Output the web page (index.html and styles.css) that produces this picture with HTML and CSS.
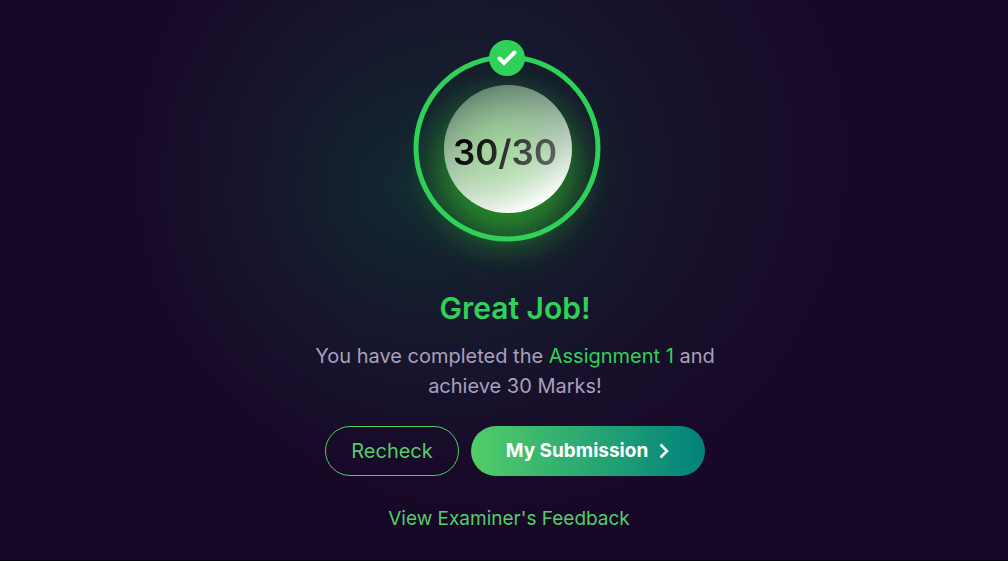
FILE: index.html
```html
<!DOCTYPE html>
<html lang="en">
<head>
<meta charset="utf-8">
<meta name="viewport" content="width=device-width, initial-scale=1">
<title>Great Job!</title>
<link rel="stylesheet" href="styles.css">
</head>
<body>
<main class="result">
  <div class="score">
    <svg class="score-art" viewBox="0 0 240 240" aria-hidden="true">
      <defs>
        <linearGradient id="ball" x1="0.3" y1="0" x2="0.7" y2="1">
          <stop offset="0" stop-color="#587568"/>
          <stop offset="0.35" stop-color="#90ac96"/>
          <stop offset="0.6" stop-color="#bccfbf"/>
          <stop offset="0.95" stop-color="#ffffff"/>
        </linearGradient>
        <radialGradient id="tint" cx="0.42" cy="0.5" r="0.55">
          <stop offset="0" stop-color="#a4e696" stop-opacity="0.65"/>
          <stop offset="1" stop-color="#a4e696" stop-opacity="0"/>
        </radialGradient>
        <filter id="soft" x="-60%" y="-60%" width="220%" height="220%">
          <feGaussianBlur stdDeviation="20"/>
        </filter>
      </defs>
      <circle cx="120" cy="142" r="70" fill="#279428" fill-opacity="0.95" filter="url(#soft)"/>
      <circle cx="120" cy="120" r="91" fill="none" stroke="#30d158" stroke-width="5"/>
      <circle cx="121" cy="121" r="64" fill="url(#ball)"/>
      <circle cx="121" cy="121" r="64" fill="url(#tint)"/>
      <circle cx="120" cy="30" r="18" fill="#30d158"/>
      <path d="M112.500 30.500 L117 35 L127.500 24.500" fill="none" stroke="#fff" stroke-width="4" stroke-linecap="round" stroke-linejoin="miter"/>
    </svg>
    <p class="score-value">30/30</p>
  </div>
  <h1 class="title">Great Job!</h1>
  <p class="message">You have completed the <span class="accent">Assignment 1</span> and achieve 30 Marks!</p>
  <div class="actions">
    <button class="button button-outline" type="button">Recheck</button>
    <button class="button button-primary" type="button">My Submission
      <svg class="chevron" viewBox="0 0 12 16" aria-hidden="true"><path d="M2.500 1.500 L9 8 L2.500 14.500" fill="none" stroke="#fff" stroke-width="2.500"/></svg>
    </button>
  </div>
  <a class="feedback" href="#">View Examiner's Feedback</a>
</main>
</body>
</html>
```
FILE: styles.css
```css
* {
  box-sizing: border-box;
}

body {
  margin: 0;
  background: #180828;
  font-family: Inter, "Liberation Sans", sans-serif;
}

.result {
  display: flex;
  flex-direction: column;
  align-items: center;
  min-height: 100vh;
  padding: 28px 0 24px 22px;
  border-bottom: 1px solid #06020c;
  background:
    radial-gradient(circle 270px at 40% 34%, rgba(16, 50, 54, 0.6), rgba(20, 36, 48, 0.35) 50%, rgba(24, 8, 40, 0) 100%),
    radial-gradient(circle 360px at 49% 28%, rgba(20, 38, 48, 0.7), rgba(24, 8, 40, 0) 100%),
    #180828;
}

.score {
  display: grid;
  place-items: center;
  width: 240px;
  margin-right: 16px;
}

.score-art,
.score-value {
  grid-area: 1 / 1;
}

.score-art {
  width: 100%;
  overflow: visible;
}

.score-value {
  margin: 8px 4px 0 0;
  font-size: 35px;
  line-height: 44px;
  font-weight: 600;
  color: transparent;
  background: linear-gradient(120deg, #000 10%, #606b62 95%);
  background-clip: text;
}

.title {
  margin: 22px 0 0;
  font-size: 30px;
  line-height: 36px;
  font-weight: 600;
  color: #30d158;
}

.message {
  max-width: 420px;
  margin: 15px 0 0;
  font-size: 20px;
  line-height: 30px;
  text-align: center;
  color: #ab9fbe;
}

.accent {
  color: #30d158;
}

.actions {
  display: flex;
  gap: 12px;
  margin-top: 25px;
}

.button {
  display: flex;
  align-items: center;
  justify-content: center;
  height: 50px;
  padding-bottom: 2px;
  border-radius: 25px;
  font-family: inherit;
  font-size: 20px;
  line-height: 24px;
  cursor: pointer;
}

.button-outline {
  min-width: 134px;
  border: 1px solid #53cd68;
  background: transparent;
  color: #53cd68;
}

.button-primary {
  gap: 10px;
  min-width: 234px;
  border: 0;
  background: linear-gradient(90deg, #53cd68, #00827c);
  color: #fff;
  font-size: 19px;
  font-weight: 700;
}

.chevron {
  width: 12px;
  height: 16px;
}

.feedback {
  margin: 31px 12px 0 0;
  font-size: 19px;
  line-height: 24px;
  color: #53cd68;
  text-decoration: none;
}
```
